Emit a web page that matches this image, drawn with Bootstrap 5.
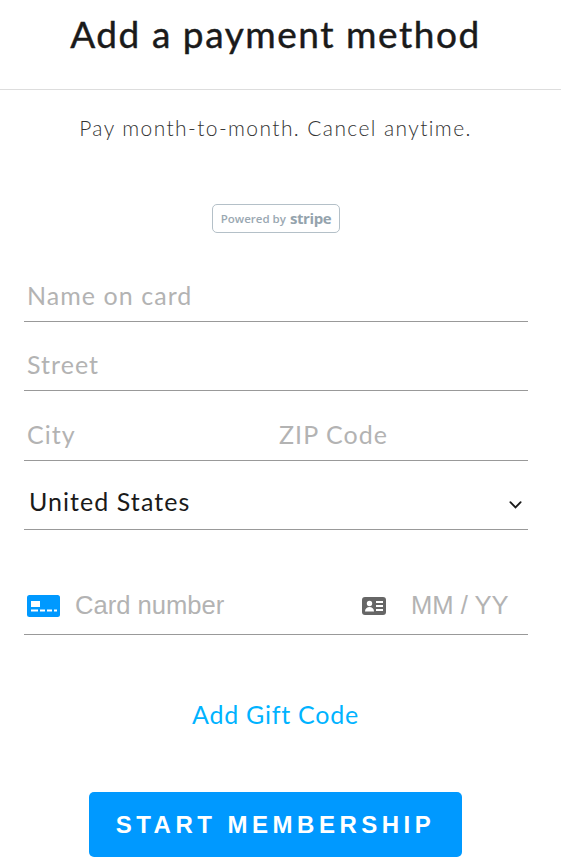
<!DOCTYPE html>
<html lang="en">
<head>
<meta charset="utf-8">
<title>Add a payment method</title>
<link rel="stylesheet" href="https://cdn.jsdelivr.net/npm/bootstrap@5.3.0/dist/css/bootstrap.min.css">
<style>
html,body{height:862px;overflow:hidden;background:#fff}
body{font-family:Lato,"Liberation Sans",sans-serif;color:#1a1a1a}
.pay-head{height:90px;border-bottom:1px solid #ddd;padding:12px 10px 0 0}
.pay-title{font-family:Lato,sans-serif;font-size:37px;line-height:44px;font-weight:400;letter-spacing:1.55px;-webkit-text-stroke:.45px #1a1a1a;margin:0;color:#1a1a1a}
.pay-sub{font-size:21px;line-height:26px;font-weight:300;letter-spacing:1.4px;color:#333;margin:25px 10px 0 0}
.badge-row{margin-top:63px;height:28px;padding-right:10px}
.stripe-badge{width:128px;height:29px;border:1.5px solid #b4c0c8;border-radius:5px;color:#9aa8b2;font-family:"Open Sans",sans-serif;font-size:11.5px;font-weight:600;gap:4px;padding-left:1px}
.stripe-word{font-size:15px;font-weight:700;letter-spacing:-.4px;color:#94a3ad}
.pay-form{padding:0 33px 0 24px}
.field{height:69px;border-bottom:1px solid #999;margin:0}
.field-first{margin-top:20px;height:70px}
.field-tall{height:70px}
.field input,.field select{background-color:transparent;border:0;border-radius:0;box-shadow:none;padding:0 3px;font-size:25px;letter-spacing:1.05px;height:100%;color:#1a1a1a;padding-top:16px}
.field input::placeholder{color:#b3b3b3;opacity:1}
.field select{padding-left:5px;padding-right:0;padding-top:13px;background-image:url("data:image/svg+xml,%3csvg xmlns='http://www.w3.org/2000/svg' viewBox='0 0 16 16'%3e%3cpath fill='none' stroke='%231a1a1a' stroke-linecap='round' stroke-width='2' d='M2.5 5.5 8 11l5.5-5.5'/%3e%3c/svg%3e");background-size:15px 15px;background-position:right 5px top 36px;background-repeat:no-repeat}
.city-col{width:252px;flex:none}
.card-row{height:105px;border-bottom:1px solid #999;padding:0 0 10px 3px}
.card-row input{border:0;background:transparent;box-shadow:none;padding:0;font-family:"Liberation Sans",sans-serif;font-size:25.6px;color:#1a1a1a;min-width:0}
.card-row input::placeholder{color:#b3b3b3;opacity:1}
.card-icon{margin:0 15px 7px 0;flex:none}
.id-icon{margin-bottom:9px;flex:none}
.card-num{flex:1}
.card-exp{width:117px;flex:none;margin-left:25px}
.gift-link{display:block;margin-top:63px;padding-right:1px;font-size:25px;line-height:32px;letter-spacing:.75px;color:#00b3ff;text-decoration:none;font-weight:400}
.start-btn{width:373px;height:65px;margin:62px 0 0 89px;display:block;background:#09f;border:0;border-radius:5px;color:#fff;font-family:"Liberation Sans",sans-serif;font-weight:700;font-size:24px;letter-spacing:4.5px;padding:0}
</style>
</head>
<body>
<header class="pay-head text-center">
  <h1 class="pay-title">Add a payment method</h1>
</header>
<p class="pay-sub text-center">Pay month-to-month. Cancel anytime.</p>
<div class="badge-row d-flex justify-content-center">
  <div class="stripe-badge d-flex align-items-center justify-content-center"><span>Powered by</span><span class="stripe-word">stripe</span></div>
</div>
<form class="pay-form">
  <div class="field field-first"><input class="form-control" type="text" placeholder="Name on card" aria-label="Name on card"></div>
  <div class="field"><input class="form-control" type="text" placeholder="Street" aria-label="Street"></div>
  <div class="field field-tall d-flex">
    <div class="city-col"><input class="form-control" type="text" placeholder="City" aria-label="City"></div>
    <div class="flex-grow-1"><input class="form-control" type="text" placeholder="ZIP Code" aria-label="ZIP Code"></div>
  </div>
  <div class="field"><select class="form-select" aria-label="Country"><option>United States</option></select></div>
  <div class="card-row d-flex align-items-end">
    <svg class="card-icon" width="33" height="22" viewBox="0 0 33 22" aria-hidden="true"><rect width="33" height="22" rx="2.5" fill="#09f"/><rect x="4" y="6" width="9" height="6" fill="#fff"/><path d="M4 15.500h7M13 15.500h5M20 15.500h5M27 15.500h3" stroke="#fff" stroke-width="2" fill="none"/></svg>
    <input class="card-num form-control" type="text" placeholder="Card number" aria-label="Card number">
    <svg class="id-icon" width="24" height="18" viewBox="0 0 24 18" aria-hidden="true"><rect width="24" height="18" rx="3" fill="#666"/><circle cx="7.500" cy="6.500" r="2.700" fill="#fff"/><path d="M3 14.500c0-3 2-4.500 4.500-4.500s4.500 1.500 4.500 4.500z" fill="#fff"/><path d="M14 5h7M14 9h7M14 13h7" stroke="#fff" stroke-width="2" fill="none"/></svg>
    <input class="card-exp form-control" type="text" placeholder="MM / YY" aria-label="Expiry">
  </div>
  <a class="gift-link text-center" href="#">Add Gift Code</a>
</form>
<button class="start-btn btn" type="button">START MEMBERSHIP</button>
<script src="https://cdn.jsdelivr.net/npm/bootstrap@5.3.0/dist/js/bootstrap.bundle.min.js"></script>
</body>
</html>
